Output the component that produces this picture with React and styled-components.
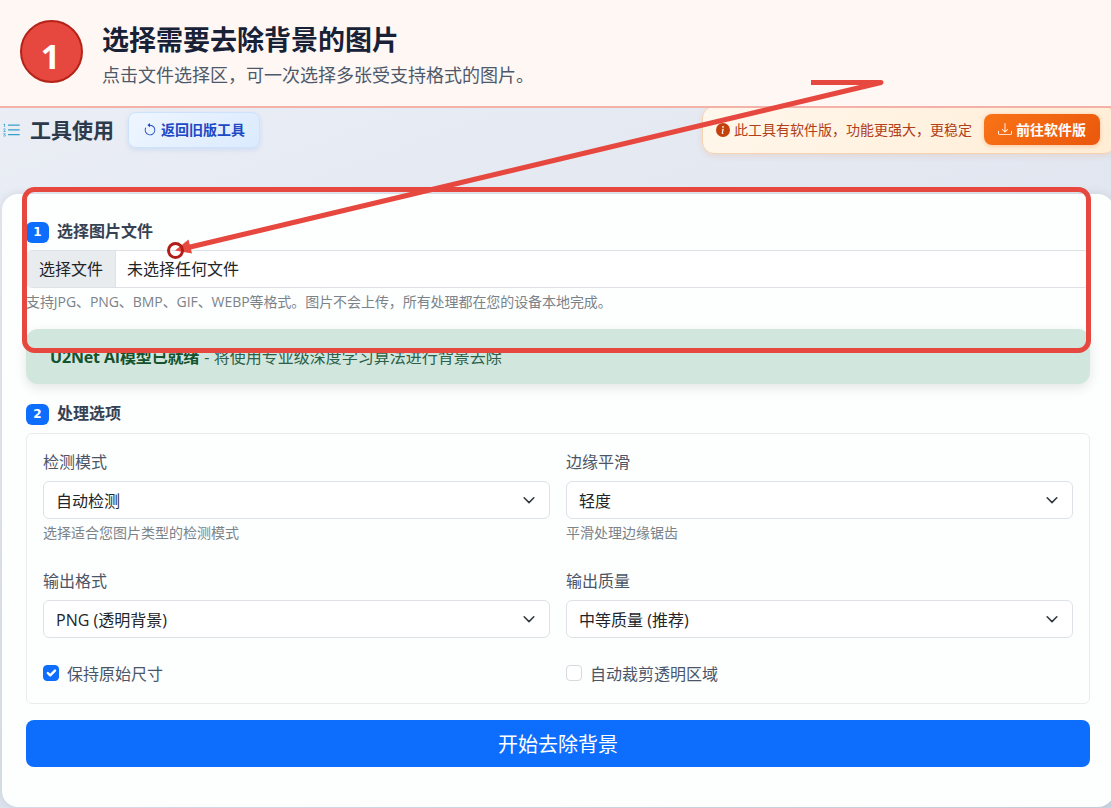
import React from "react";
import styled, { createGlobalStyle } from "styled-components";
import { BsListOl, BsArrowCounterclockwise, BsInfoCircleFill, BsDownload } from "react-icons/bs";

const Global = createGlobalStyle`
  * { box-sizing: border-box; }
  body {
    margin: 0;
    overflow: hidden;
    font-family: "Open Sans", "Noto Sans CJK SC", sans-serif;
    color: #212529;
  }
`;

const Page = styled.div`
  position: relative;
  width: 1111px;
  height: 808px;
  overflow: hidden;
  display: flex;
  flex-direction: column;
  background: linear-gradient(160deg, #eceff6 0%, #e3e8f1 40%, #dde3ed 70%, #cbd5e1 100%);
`;

const StepBar = styled.header`
  height: 108px;
  flex: none;
  display: flex;
  align-items: flex-start;
  gap: 19px;
  padding: 20px 20px 0;
  background: #fff7f4;
  border-bottom: 2px solid #f4b1a7;
`;

const StepNumber = styled.div`
  width: 63px;
  height: 63px;
  border-radius: 50%;
  border: 2px solid #b42318;
  background: #e6483f;
  color: #fff;
  display: flex;
  align-items: center;
  justify-content: center;
  font: bold 34px/1 "Noto Sans", sans-serif;
  padding: 8px 2px 0 0;
`;

const StepText = styled.div`
  font-family: "Noto Sans CJK SC", sans-serif;
`;

const StepTitle = styled.h1`
  margin: 0;
  font-size: 27px;
  line-height: 38px;
  font-weight: 700;
  color: #182136;
`;

const StepDescription = styled.p`
  margin: 3px 0 0;
  font-size: 18px;
  line-height: 26px;
  color: #4d596b;
`;

const Toolbar = styled.div`
  width: 1116px;
  height: 46px;
  flex: none;
  display: flex;
  align-items: flex-start;
  padding-left: 2px;
`;

const ToolbarTitle = styled.h2`
  display: flex;
  align-items: center;
  gap: 9px;
  margin: 3px 14px 0 0;
  height: 36px;
  font-size: 21px;
  font-weight: 600;
  color: #2c3a4c;
  svg { color: #35a0cc; width: 19px; height: 19px; margin-top: 3px; }
`;

const LegacyButton = styled.button`
  display: flex;
  align-items: center;
  justify-content: center;
  gap: 4px;
  width: 132px;
  height: 36px;
  margin-top: 4px;
  padding: 0 0 2px;
  border: 1px solid #cfe2fb;
  border-radius: 8px;
  background: linear-gradient(135deg, #eef6ff, #dbeafe);
  box-shadow: 0 2px 5px rgba(59, 130, 246, 0.14);
  color: #1d49c4;
  font: 600 14px "Noto Sans CJK SC", sans-serif;
  svg { font-size: 14px; margin-top: 2px; }
`;

const Promo = styled.aside`
  display: flex;
  align-items: center;
  width: 414px;
  height: 48px;
  margin: -2px 0 0 auto;
  padding: 0 12px 2px 13px;
  border: 1px solid #f6d3b0;
  border-radius: 12px;
  background: linear-gradient(135deg, #fff7ec, #ffedd5);
  box-shadow: 0 2px 6px rgba(234, 88, 12, 0.12);
  font-size: 14px;
  color: #b0401a;
  clip-path: inset(2px -8px -10px -8px);
  > svg { font-size: 14px; margin: 2px 4px 0 0; color: #c2410c; }
`;

const DownloadButton = styled.button`
  display: flex;
  align-items: center;
  justify-content: center;
  gap: 4px;
  width: 116px;
  height: 31px;
  margin: 1px 0 0 12px;
  padding: 0 0 1px;
  border: 0;
  border-radius: 8px;
  background: linear-gradient(135deg, #f97316, #ea580c);
  box-shadow: 0 1px 4px rgba(234, 88, 12, 0.3);
  color: #fff;
  font: 700 14px "Noto Sans CJK SC", sans-serif;
`;

const Card = styled.main`
  width: 1112px;
  height: 613px;
  flex: none;
  margin: 40px 0 0 2px;
  padding: 27px 24px 0;
  border-radius: 16px;
  background: #fdfefe;
  box-shadow: 0 0 8px rgba(71, 85, 105, 0.15);
`;

const SectionTitle = styled.h3`
  display: flex;
  align-items: center;
  gap: 8px;
  height: 21px;
  margin: 0;
  font-size: 16px;
  font-weight: 600;
  line-height: 21px;
  color: #364254;
`;

const SectionName = styled.span`
  padding-bottom: 1px;
`;

const Badge = styled.span`
  flex: none;
  width: 23px;
  height: 21px;
  margin-top: 2px;
  border-radius: 6px;
  background: #0d6efd;
  color: #fff;
  font: 700 12px/21px "DejaVu Sans", sans-serif;
  text-align: center;
`;

const FileField = styled.div`
  display: flex;
  align-items: stretch;
  height: 38px;
  margin-top: 8px;
  border: 1px solid #dee2e6;
  border-radius: 6px;
  overflow: hidden;
  background: #fff;
  font-size: 16px;
  line-height: 36px;
`;

const FileButton = styled.span`
  width: 89px;
  padding-left: 12px;
  background: #e9ecef;
  border-right: 1px solid #dee2e6;
  margin-right: 11px;
`;

const Help = styled.p`
  margin: 3px 0 0;
  font-size: 14px;
  line-height: 21px;
  letter-spacing: ${(p) => (p.$tight ? "-0.07px" : "normal")};
  color: #7b8389;
`;

const Alert = styled.div`
  height: 55px;
  margin: 17px 0 19px;
  padding: 16px 24px;
  border-radius: 12px;
  background: #d1e7dd;
  box-shadow: 0 4px 12px rgba(0, 0, 0, 0.1);
  color: #2c6049;
  font-size: 16px;
  line-height: 24px;
  b { color: #14532d; letter-spacing: -0.15px; margin-right: 1px; }
`;

const Options = styled.section`
  display: grid;
  grid-template-columns: 1fr 1fr;
  grid-template-rows: 119px 101px auto;
  column-gap: 16px;
  height: 271px;
  margin: 9px 0 16px;
  padding: 16px;
  border: 1px solid #e9ecef;
  border-radius: 6px;
`;

const Label = styled.label`
  display: block;
  height: 24px;
  margin-bottom: 7px;
  font-size: 16px;
  line-height: 24px;
  color: #4b5567;
`;

const SelectBox = styled.div`
  display: flex;
  align-items: center;
  justify-content: space-between;
  height: 38px;
  padding: 0 13px 0 12px;
  border: 1px solid #dee2e6;
  border-radius: 6px;
  background: #fff;
  font-size: 16px;
`;

const Check = styled.label`
  display: flex;
  align-items: center;
  gap: 8px;
  height: 24px;
  margin-top: -9px;
  font-size: 16px;
  color: #4b5567;
`;

const Tick = styled.span`
  display: flex;
  align-items: center;
  justify-content: center;
  width: 16px;
  height: 16px;
  border: 1px solid ${(p) => (p.$on ? "#0d6efd" : "#d5dade")};
  border-radius: 4px;
  background: ${(p) => (p.$on ? "#0d6efd" : "#fff")};
  svg { flex: none; }
`;

const StartButton = styled.button`
  display: block;
  width: 100%;
  height: 47px;
  padding: 0;
  border: 0;
  border-radius: 8px;
  background: #0d6efd;
  color: #fff;
  font: 400 20px/46px "Noto Sans CJK SC", sans-serif;
`;

const Annotation = styled.svg`
  position: absolute;
  inset: 0;
  pointer-events: none;
`;

function Select({ label, value, help }) {
  return (
    <div>
      <Label>{label}</Label>
      <SelectBox>
        {value}
        <svg width="14" height="14" viewBox="0 0 16 16" fill="none" stroke="#343a40" strokeWidth="1.800" strokeLinecap="round" strokeLinejoin="round">
          <path d="m2.500 5.500 5.500 5.500 5.500-5.500" />
        </svg>
      </SelectBox>
      {help && <Help>{help}</Help>}
    </div>
  );
}

export default function App() {
  return (
    <Page>
      <Global />
      <StepBar>
        <StepNumber>1</StepNumber>
        <StepText>
          <StepTitle>选择需要去除背景的图片</StepTitle>
          <StepDescription>点击文件选择区，可一次选择多张受支持格式的图片。</StepDescription>
        </StepText>
      </StepBar>
      <Toolbar>
        <ToolbarTitle><BsListOl />工具使用</ToolbarTitle>
        <LegacyButton><BsArrowCounterclockwise />返回旧版工具</LegacyButton>
        <Promo>
          <BsInfoCircleFill />
          此工具有软件版，功能更强大，更稳定
          <DownloadButton><BsDownload />前往软件版</DownloadButton>
        </Promo>
      </Toolbar>
      <Card>
        <SectionTitle><Badge>1</Badge><SectionName>选择图片文件</SectionName></SectionTitle>
        <FileField><FileButton>选择文件</FileButton>未选择任何文件</FileField>
        <Help $tight>支持JPG、PNG、BMP、GIF、WEBP等格式。图片不会上传，所有处理都在您的设备本地完成。</Help>
        <Alert><b>U2Net AI模型已就绪</b> - 将使用专业级深度学习算法进行背景去除</Alert>
        <SectionTitle><Badge>2</Badge><SectionName>处理选项</SectionName></SectionTitle>
        <Options>
          <Select label="检测模式" value="自动检测" help="选择适合您图片类型的检测模式" />
          <Select label="边缘平滑" value="轻度" help="平滑处理边缘锯齿" />
          <Select label="输出格式" value="PNG (透明背景)" />
          <Select label="输出质量" value="中等质量 (推荐)" />
          <Check>
            <Tick $on>
              <svg width="16" height="16" viewBox="0 0 20 20" fill="none" stroke="#fff" strokeWidth="3" strokeLinecap="round" strokeLinejoin="round">
                <path d="m6 10 3 3 6-6" />
              </svg>
            </Tick>
            保持原始尺寸
          </Check>
          <Check><Tick />自动裁剪透明区域</Check>
        </Options>
        <StartButton>开始去除背景</StartButton>
      </Card>
      <Annotation width="1111" height="808" fill="none">
        <rect x="24.5" y="189.500" width="1064" height="161" rx="10" stroke="#e6483f" strokeWidth="5" />
        <path d="M811 82.500H881L186 248" stroke="#e6483f" strokeWidth="5" strokeLinejoin="round" />
        <path d="M175 250.500 188.500 239.500 192 253.500Z" fill="#e6483f" />
        <circle cx="175.500" cy="250.500" r="7" stroke="#b01c18" strokeWidth="3" />
      </Annotation>
    </Page>
  );
}
